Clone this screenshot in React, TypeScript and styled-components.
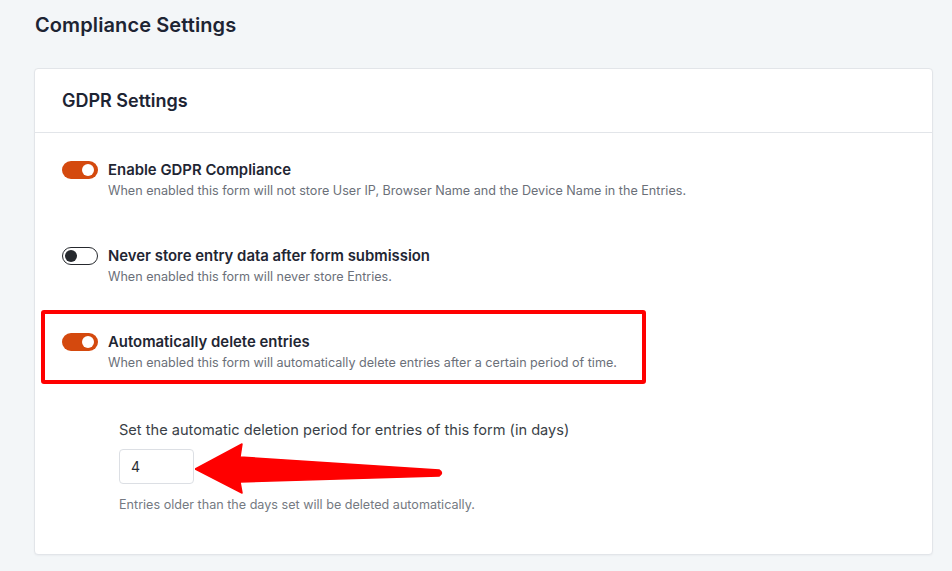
import React, { useState } from 'react';
import styled, { createGlobalStyle } from 'styled-components';

const GlobalStyle = createGlobalStyle`
    html, body {
        margin: 0;
        padding: 0;
        background: #f3f6f8;
    }
    body {
        font-family: Inter, 'Noto Sans', 'Liberation Sans', sans-serif;
        -webkit-font-smoothing: antialiased;
    }
`;

const Page = styled.div`
    padding: 11px 19px 18px 34px;
`;

const PageTitle = styled.h1`
    margin: 0 0 0 1px;
    font-size: 20px;
    line-height: 28px;
    font-weight: 600;
    color: #1d2433;
    letter-spacing: 0.1px;
`;

const Card = styled.section`
    margin-top: 29px;
    background: #fff;
    border: 1px solid #e2e5e9;
    border-radius: 4px;
    box-shadow: 0 1px 2px rgba(16, 24, 40, 0.04);
`;

const CardHeader = styled.div`
    height: 63px;
    display: flex;
    align-items: center;
    padding-left: 27px;
    border-bottom: 1px solid #e2e5e9;
`;

const CardTitle = styled.h2`
    margin: 0;
    font-size: 18px;
    font-weight: 600;
    color: #1d2433;
`;

const CardBody = styled.div`
    padding: 27px 27px 39px;
    display: flex;
    flex-direction: column;
    gap: 45px;
`;

const Row = styled.div`
    position: relative;
    display: flex;
    align-items: flex-start;
    gap: 10px;
`;

const Highlight = styled.div`
    position: absolute;
    left: -21px;
    top: -22px;
    width: 605px;
    height: 74px;
    box-sizing: border-box;
    border: 4px solid #ff0000;
    border-radius: 3px;
    pointer-events: none;
`;

const Track = styled.button<{ $on: boolean }>`
    position: relative;
    flex: none;
    width: 36px;
    height: 18px;
    margin-top: 1px;
    padding: 0;
    border-radius: 9px;
    cursor: pointer;
    box-sizing: border-box;
    border: ${p => (p.$on ? 'none' : '1.5px solid #26292e')};
    background: ${p => (p.$on ? '#d4490e' : '#fff')};

    &::after {
        content: '';
        position: absolute;
        top: ${p => (p.$on ? '3px' : '1.5px')};
        left: ${p => (p.$on ? '20px' : '1.5px')};
        width: 12px;
        height: 12px;
        border-radius: 50%;
        background: ${p => (p.$on ? '#fff' : '#26292e')};
    }
`;

const Texts = styled.div`
    display: flex;
    flex-direction: column;
`;

const Label = styled.div`
    font-size: 14.9px;
    line-height: 20px;
    font-weight: 600;
    color: #1f2633;
`;

const Help = styled.div`
    font-size: 12.6px;
    line-height: 21px;
    color: #6b7079;
`;

const SubSection = styled.div`
    margin: 2px 0 0 57px;
    display: flex;
    flex-direction: column;
`;

const FieldLabel = styled.label`
    font-size: 14.6px;
    line-height: 20px;
    color: #3a3f47;
`;

const FieldRow = styled.div`
    position: relative;
    margin-top: 9px;
`;

const NumberInput = styled.input`
    width: 75px;
    height: 35px;
    box-sizing: border-box;
    border: 1px solid #dcdfe4;
    border-radius: 4px;
    padding: 0 11px;
    font-family: inherit;
    font-size: 14px;
    color: #2a2e35;
    outline: none;
`;

const Arrow = styled.svg`
    position: absolute;
    left: 76px;
    top: -7px;
    pointer-events: none;
`;

const FieldHelp = styled.div`
    margin-top: 11px;
    font-size: 12.6px;
    line-height: 20px;
    color: #757a82;
`;

interface SettingProps {
    label: string;
    help: string;
    on: boolean;
    onToggle: () => void;
    highlighted?: boolean;
}

const Setting: React.FC<SettingProps> = ({ label, help, on, onToggle, highlighted }) => (
    <Row>
        {highlighted && <Highlight />}
        <Track $on={on} onClick={onToggle} aria-pressed={on} />
        <Texts>
            <Label>{label}</Label>
            <Help>{help}</Help>
        </Texts>
    </Row>
);

export default function App() {
    const [gdpr, setGdpr] = useState(true);
    const [neverStore, setNeverStore] = useState(false);
    const [autoDelete, setAutoDelete] = useState(true);
    const [days, setDays] = useState('4');

    return (
        <>
            <GlobalStyle />
            <Page>
                <PageTitle>Compliance Settings</PageTitle>
                <Card>
                    <CardHeader>
                        <CardTitle>GDPR Settings</CardTitle>
                    </CardHeader>
                    <CardBody>
                        <Setting
                            label="Enable GDPR Compliance"
                            help="When enabled this form will not store User IP, Browser Name and the Device Name in the Entries."
                            on={gdpr}
                            onToggle={() => setGdpr(v => !v)}
                        />
                        <Setting
                            label="Never store entry data after form submission"
                            help="When enabled this form will never store Entries."
                            on={neverStore}
                            onToggle={() => setNeverStore(v => !v)}
                        />
                        <Setting
                            label="Automatically delete entries"
                            help="When enabled this form will automatically delete entries after a certain period of time."
                            on={autoDelete}
                            onToggle={() => setAutoDelete(v => !v)}
                            highlighted
                        />
                        {autoDelete && (
                            <SubSection>
                                <FieldLabel>
                                    Set the automatic deletion period for entries of this form (in days)
                                </FieldLabel>
                                <FieldRow>
                                    <NumberInput value={days} onChange={e => setDays(e.target.value)} />
                                    <Arrow width="252" height="54" viewBox="0 0 252 54">
                                        <path
                                            d="M0 27 L47 2 L45 15 L244 28 Q249 31 244 34 L45 40 L47 51 Z"
                                            fill="#ff0000"
                                            stroke="#ff0000"
                                            strokeWidth="1.5"
                                            strokeLinejoin="round"
                                        />
                                    </Arrow>
                                </FieldRow>
                                <FieldHelp>Entries older than the days set will be deleted automatically.</FieldHelp>
                            </SubSection>
                        )}
                    </CardBody>
                </Card>
            </Page>
        </>
    );
}
